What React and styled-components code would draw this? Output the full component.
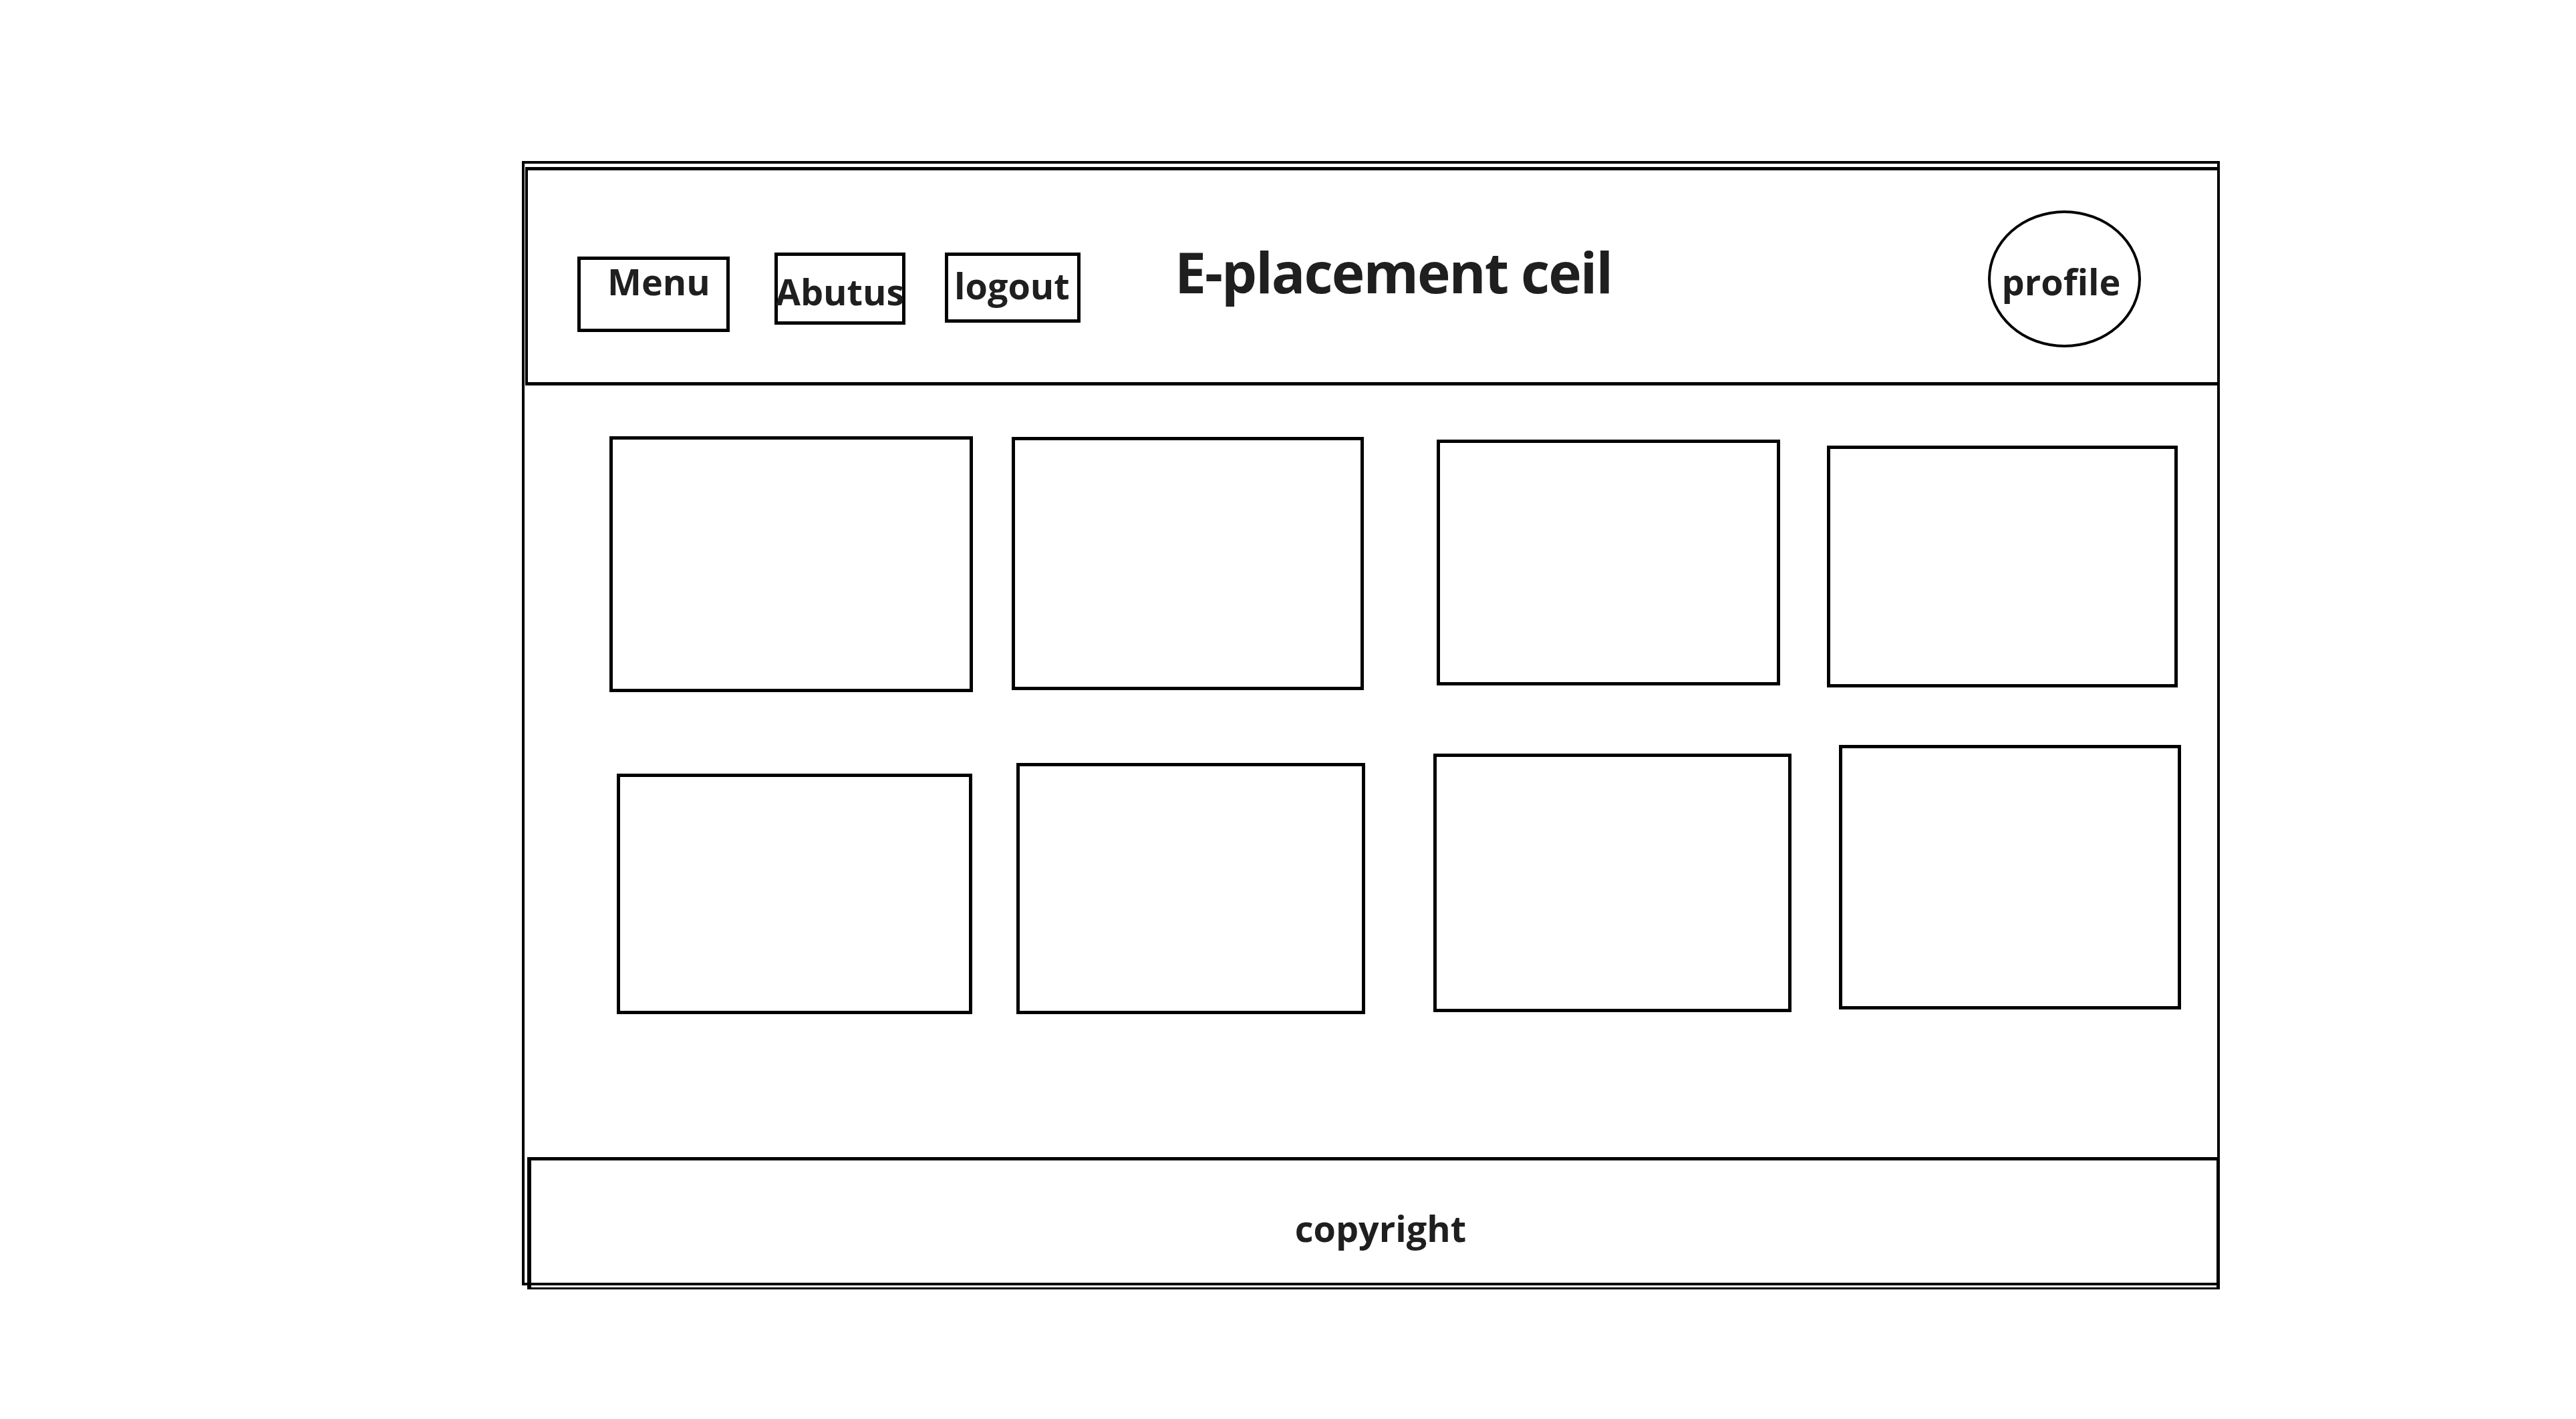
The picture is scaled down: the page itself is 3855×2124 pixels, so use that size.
import React from "react";
import styled, { createGlobalStyle } from "styled-components";

const Global = createGlobalStyle`
  html, body { margin: 0; padding: 0; background: #ffffff; }
  body { font-family: "Open Sans", "Noto Sans", "Liberation Sans", sans-serif; color: #1f1f1f; }
  * { box-sizing: border-box; }
`;

const Page = styled.div`
  width: 3855px;
  height: 2124px;
  padding: 241px 0 0 781px;
  background: #fff;
  overflow: hidden;
`;

const Frame = styled.div`
  width: 2541px;
  height: 1683px;
  border: 4px solid #000;
  padding-top: 5px;
  display: flex;
  flex-direction: column;
`;

const Header = styled.header`
  height: 327px;
  margin-left: 1px;
  border-top: 5px solid #000;
  border-bottom: 5px solid #000;
  border-left: 4px solid #000;
  display: flex;
  align-items: flex-start;
  padding: 0 114px 0 74px;
`;

const NavButton = styled.div`
  width: ${(p) => p.$w}px;
  height: ${(p) => p.$h}px;
  margin-top: ${(p) => p.$top}px;
  margin-left: ${(p) => p.$gap}px;
  border: 5px solid #000;
  display: flex;
  justify-content: ${(p) => p.$justify};
  padding-top: ${(p) => p.$padTop}px;
  padding-left: ${(p) => p.$padLeft}px;
  font-size: 54px;
  font-weight: 700;
  line-height: 1;
  white-space: nowrap;
  overflow: visible;
`;

const Title = styled.h1`
  margin: 110px 0 0 141px;
  font-size: 84px;
  font-weight: 700;
  letter-spacing: -2px;
  line-height: 1;
  white-space: nowrap;
  color: #1f1f1f;
`;

const Profile = styled.div`
  margin-left: auto;
  margin-top: 60px;
  width: 229px;
  height: 205px;
  border: 4px solid #000;
  border-radius: 50%;
  display: flex;
  justify-content: center;
  padding-top: 75px;
  padding-right: 10px;
  font-size: 54px;
  font-weight: 700;
  line-height: 1;
`;

const Main = styled.main`
  flex: 1;
  padding: 76px 0 0 127px;
  display: grid;
  grid-template-columns: 602px 631px 589px auto;
  grid-template-rows: 462px auto;
  align-items: start;
  justify-items: start;
`;

const Card = styled.div`
  width: ${(p) => p.$w}px;
  height: ${(p) => p.$h}px;
  margin-left: ${(p) => p.$dx}px;
  margin-top: ${(p) => p.$dy}px;
  border: 5px solid #000;
  background: #fff;
`;

const Footer = styled.footer`
  height: 198px;
  margin: 0 -4px -10px 4px;
  border-top: 5px solid #000;
  border-left: 6px solid #000;
  border-right: 5px solid #000;
  border-bottom: 3px solid #000;
  background: transparent;
  display: flex;
  justify-content: center;
  padding-top: 74px;
  padding-left: 20px;
  font-size: 54px;
  font-weight: 700;
  line-height: 1;
`;

const cards = [
  { dx: 0, dy: 0, w: 544, h: 383 },
  { dx: 0, dy: 1, w: 527, h: 379 },
  { dx: 5, dy: 5, w: 514, h: 368 },
  { dx: 0, dy: 14, w: 525, h: 362 },
  { dx: 11, dy: 43, w: 532, h: 360 },
  { dx: 7, dy: 27, w: 522, h: 376 },
  { dx: 0, dy: 13, w: 536, h: 387 },
  { dx: 18, dy: 0, w: 512, h: 396 },
];

export default function App() {
  return (
    <>
      <Global />
      <Page>
        <Frame>
          <Header>
            <NavButton $w={228} $h={113} $top={129} $gap={0} $justify="flex-start" $padTop={5} $padLeft={40}>
              Menu
            </NavButton>
            <NavButton $w={196} $h={108} $top={123} $gap={67} $justify="center" $padTop={26} $padLeft={0}>
              Abutus
            </NavButton>
            <NavButton $w={203} $h={105} $top={123} $gap={59} $justify="flex-start" $padTop={17} $padLeft={9}>
              logout
            </NavButton>
            <Title>E-placement ceil</Title>
            <Profile>profile</Profile>
          </Header>
          <Main>
            {cards.map((c, i) => (
              <Card key={i} $dx={c.dx} $dy={c.dy} $w={c.w} $h={c.h} />
            ))}
          </Main>
          <Footer>copyright</Footer>
        </Frame>
      </Page>
    </>
  );
}
